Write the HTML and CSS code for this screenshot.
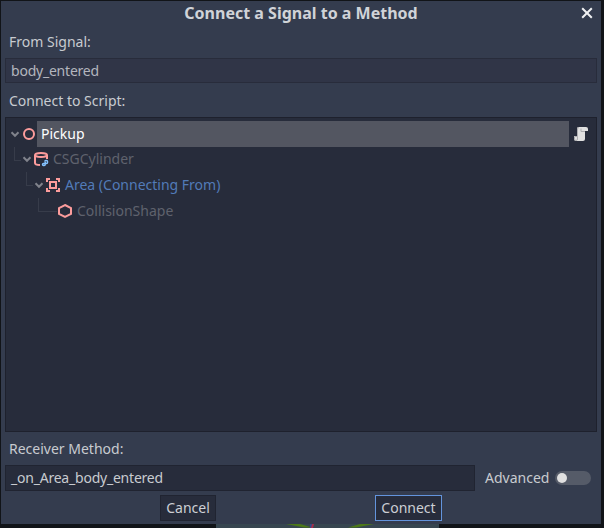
FILE: index.html
```
<!DOCTYPE html>
<html lang="en">
<head>
<meta charset="utf-8">
<title>Connect a Signal to a Method</title>
<link rel="stylesheet" href="styles.css">
</head>
<body>
<main class="dialog">
  <header class="titlebar">
    <h1>Connect a Signal to a Method</h1>
    <svg class="close" viewBox="0 0 12 12"><path d="M1.2 1.2l9.6 9.6M10.8 1.2L1.2 10.8"/></svg>
  </header>
  <div class="label">From Signal:</div>
  <div class="field readonly">body_entered</div>
  <div class="label second">Connect to Script:</div>
  <section class="tree">
    <div class="row">
      <svg class="chevron" viewBox="0 0 12 12"><path d="M2.5 4.3L6 7.8l3.5-3.5"/></svg>
      <svg class="icon" viewBox="0 0 16 16"><circle cx="8" cy="8" r="5"/></svg>
      <span class="name selected">Pickup</span>
      <svg class="script" viewBox="0 0 16 16">
        <path class="paper" d="M5 1h8a2 2 0 0 1 2 2v2h-3v8a2 2 0 0 1-2 2H3a2 2 0 0 1-2-2v-3h3V3a2 2 0 0 1 1-2z"/>
        <path class="fold" d="M6 1.5a1.5 1.5 0 0 0-1.5 1.5v7.5H1.5V13a1.5 1.5 0 0 0 3 0v-2.5M8 2.5V5.5h4"/>
      </svg>
    </div>
    <div class="row level1">
      <i class="branch"></i>
      <svg class="chevron" viewBox="0 0 12 12"><path d="M2.5 4.3L6 7.8l3.5-3.5"/></svg>
      <svg class="icon" viewBox="0 0 16 16">
        <ellipse cx="8" cy="4" rx="6" ry="2"/><path d="M2 4v8c0 1.1 2.2 1.9 5 2M14 4v4"/>
        <path class="csg" d="M11.8 10.6a1 1 0 0 1 1-1h.7a1 1 0 0 1 1 1v.8a1 1 0 0 1-1 1h-3a1 1 0 0 0-1 1v.2a1 1 0 0 0 1 1h.7a1 1 0 0 0 1-1v-2.8"/>
      </svg>
      <span class="name muted">CSGCylinder</span>
    </div>
    <div class="row level2">
      <i class="branch"></i>
      <svg class="chevron" viewBox="0 0 12 12"><path d="M2.5 4.3L6 7.8l3.5-3.5"/></svg>
      <svg class="icon" viewBox="0 0 16 16"><path d="M5 5h6v6H5zM2 5V2h3M11 2h3v3M14 11v3h-3M5 14H2v-3"/></svg>
      <span class="name source">Area (Connecting From)</span>
    </div>
    <div class="row level3">
      <i class="branch long"></i>
      <i class="spacer"></i>
      <svg class="icon" viewBox="0 0 16 16"><path d="M8 2l6 3v6l-6 3-6-3V5z"/></svg>
      <span class="name muted">CollisionShape</span>
    </div>
  </section>
  <div class="label receiver">Receiver Method:</div>
  <div class="method">
    <div class="field">_on_Area_body_entered</div>
    <span class="advanced">Advanced</span>
    <span class="switch"><i></i></span>
  </div>
  <footer class="actions">
    <button class="cancel">Cancel</button>
    <button class="connect">Connect</button>
  </footer>
</main>
<svg class="viewport" viewBox="0 0 223 4"><path class="grass" d="M70 0h14l12 3.5h-8zM158 0h-14l-12 3.5h8z"/><path class="zaxis" d="M94 0h2v4h-2z"/><path class="xaxis" d="M96 0h2l-1 4h-2z"/></svg>
</body>
</html>
```
FILE: styles.css
```
* { box-sizing: border-box; }
body {
  margin: 0;
  padding: 1px 0 0 1px;
  width: 604px;
  height: 528px;
  overflow: hidden;
  background: #111418;
  color: #c8cbd0;
  font: 14px/20px "Noto Sans", sans-serif;
}
svg { display: block; fill: none; }
.dialog {
  display: flex;
  flex-direction: column;
  width: 600px;
  height: 523px;
  padding: 0 4px;
  background: #343c4e;
}
.titlebar {
  position: relative;
  height: 24px;
}
h1 {
  margin: 0;
  font-size: 16px;
  line-height: 24px;
  font-weight: 700;
  text-align: center;
  color: #d0d3d8;
}
.close {
  position: absolute;
  right: 4px;
  top: 6px;
  width: 12px;
  height: 12px;
  stroke: #f0f1f3;
  stroke-width: 2;
}
.label {
  height: 20px;
  margin: 7px 0 6px;
  padding-left: 4px;
}
.label.second { margin: 8px 0 6px; }
.field {
  height: 26px;
  padding-left: 5px;
  border: 1px solid #202431;
  background: #272c3b;
  line-height: 24px;
  letter-spacing: -0.22px;
}
.field.readonly {
  height: 25px;
  border-color: #282c3b;
  background: #303547;
  color: #b3b5be;
}
.tree {
  height: 315px;
  padding: 3px;
  border: 1px solid #1e212d;
  background: #272c3b;
}
.row {
  position: relative;
  display: flex;
  align-items: center;
  height: 25.6px;
}
.level1 { padding-left: 12px; }
.level2 { padding-left: 24px; }
.level3 { padding-left: 36px; }
.chevron, .spacer { width: 12px; height: 12px; flex: none; }
.chevron { stroke: #80838c; stroke-width: 2; }
.icon {
  width: 16px;
  height: 16px;
  flex: none;
  stroke: #fc9c9c;
  stroke-width: 2;
}
.csg { stroke: #84c2ff; stroke-width: 1.5; }
.name { padding-left: 4px; white-space: nowrap; }
.selected {
  width: 532px;
  height: 26px;
  line-height: 26px;
  background: #535661;
  color: #fff;
}
.muted { color: #5f626d; }
.source { color: #527bb8; }
.script { width: 16px; height: 16px; margin-left: 4px; }
.paper { fill: #e0e0e0; }
.fold { stroke: #adadb0; stroke-width: 1; }
.branch {
  position: absolute;
  top: 0;
  width: 7px;
  height: 14px;
  margin-left: -7px;
  border: solid #373c4a;
  border-width: 0 0 1px 1px;
}
.branch.long { width: 19px; }
.label.receiver { margin: 7px 0 6px; }
.method { display: flex; align-items: center; }
.method .field { width: 470px; }
.advanced { margin-left: 10px; width: 70px; }
.switch {
  width: 36px;
  height: 14px;
  padding: 2px;
  border-radius: 7px;
  background: #555b68;
}
.switch i {
  display: block;
  width: 10px;
  height: 10px;
  border-radius: 50%;
  background: #e0e0e0;
}
.actions {
  display: flex;
  gap: 159px;
  margin-top: 4px;
  padding-left: 155px;
}
button {
  height: 26px;
  padding: 0;
  border: 1px solid #202431;
  background: #272c3b;
  color: #cccfd4;
  font: inherit;
}
.cancel { width: 56px; }
.connect { width: 67px; border-color: #6394dc; }
.viewport { width: 223px; height: 4px; margin-left: 215px; background: #374650; }
.grass { fill: #4c7817; }
.zaxis { fill: #304c88; }
.xaxis { fill: #a52e4a; }
```
